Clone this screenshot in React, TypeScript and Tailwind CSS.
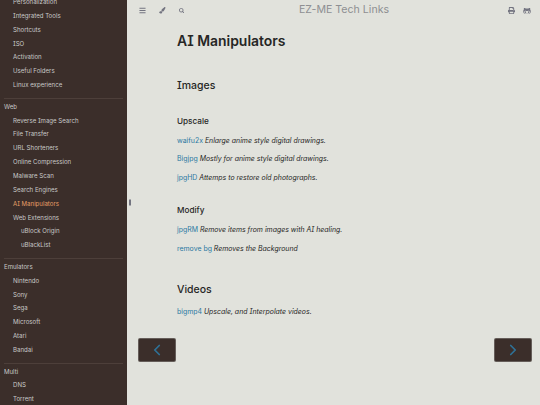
import { ChevronLeft, ChevronRight } from 'lucide-react'
import { FaBars, FaPaintBrush, FaSearch, FaPrint, FaGithubAlt } from 'react-icons/fa'

const SIDEBAR = [
  { items: ['Personalization', 'Integrated Tools', 'Shortcuts', 'ISO', 'Activation', 'Useful Folders', 'Linux experience'] },
  { title: 'Web', items: ['Reverse Image Search', 'File Transfer', 'URL Shorteners', 'Online Compression', 'Malware Scan', 'Search Engines', 'AI Manipulators', 'Web Extensions', '>uBlock Origin', '>uBlackList'] },
  { title: 'Emulators', items: ['Nintendo', 'Sony', 'Sega', 'Microsoft', 'Atari', 'Bandai'] },
  { title: 'Multi', items: ['DNS', 'Torrent'] },
]

function Row({ label, heading }: { label: string; heading?: boolean }) {
  const nested = label.startsWith('>')
  const active = label === 'AI Manipulators'
  const indent = heading ? 'pl-[4px]' : nested ? 'pl-[21px]' : 'pl-[13px]'
  return (
    <div className={`h-[13.87px] leading-[13.87px] whitespace-nowrap ${indent} ${active ? 'text-[#e69f67]' : 'text-[#c8c9c8]'}`}>
      {nested ? label.slice(1) : label}
    </div>
  )
}

function Entry({ name, text }: { name: string; text: string }) {
  return (
    <p className="h-[11px] leading-[11px] whitespace-nowrap text-[6.95px] text-[#262625]">
      <span className="text-[#2b79a2]">{name}</span> <em>{text}</em>
    </p>
  )
}

function NavButton({ children }: { children: React.ReactNode }) {
  return (
    <div className="w-[38px] h-[24px] flex items-center justify-center bg-[#3b2e2a] border border-[#c8c9c8]/30 rounded-[2px] text-[#2f7196]">
      {children}
    </div>
  )
}

export default function App() {
  return (
    <div className="w-[540px] h-[405px] flex overflow-hidden bg-[#e1e2dc] font-['Inter',sans-serif] [font-feature-settings:'cv08']">
      {/* sidebar */}
      <aside className="w-[127px] h-full shrink-0 overflow-hidden bg-[#3b2e2a] text-[6.1px]">
        <div className="-mt-[5px]">
          {SIDEBAR.map((group, i) => (
            <div key={i}>
              {group.title && (
                <>
                  <div className="mx-[4px] mt-[6px] mb-[0.7px] h-px bg-[#4d3f3a]" />
                  <Row label={group.title} heading />
                </>
              )}
              {group.items.map(item => <Row key={item} label={item} />)}
            </div>
          ))}
        </div>
      </aside>

      <div className="w-[5px] shrink-0 flex items-center justify-center -mr-[5px] z-10">
        <div className="w-[2px] h-[6px] bg-[#737480] -translate-y-[0.5px]" />
      </div>

      {/* page */}
      <main className="flex-1 min-w-0 flex flex-col">
        <header className="h-[21px] shrink-0 flex items-center pl-[12px] pr-[9px] text-[#737480]">
          <FaBars size={7} className="mr-[13px]" />
          <FaPaintBrush size={6.5} className="mr-[13px]" />
          <FaSearch size={5.5} />
          <div className="flex-1 text-center text-[10.6px] leading-none text-[#8e8f92] -translate-x-[2px]">EZ-ME Tech Links</div>
          <FaPrint size={7} className="mr-[8px]" />
          <FaGithubAlt size={8} />
        </header>

        <article className="flex-1 min-h-0 pl-[50px] text-[#262625]">
          <h1 className="mt-[10px] h-[20px] leading-[20px] text-[13.95px] font-semibold">AI Manipulators</h1>
          <h2 className="mt-[26px] h-[17px] leading-[17px] text-[10.5px] font-medium">Images</h2>
          <h3 className="mt-[21px] h-[12px] leading-[12px] text-[8.2px] font-medium">Upscale</h3>
          <div className="mt-[8px] flex flex-col gap-[7.4px]">
            <Entry name="waifu2x" text="Enlarge anime style digital drawings." />
            <Entry name="Bigjpg" text="Mostly for anime style digital drawings." />
            <Entry name="jpgHD" text="Attemps to restore old photographs." />
          </div>
          <h3 className="mt-[21.5px] h-[12px] leading-[12px] text-[8.2px] font-medium">Modify</h3>
          <div className="mt-[8px] flex flex-col gap-[7.4px]">
            <Entry name="jpgRM" text="Remove items from images with AI healing." />
            <Entry name="remove bg" text="Removes the Background" />
          </div>
          <h2 className="mt-[27px] h-[17px] leading-[17px] text-[10.5px] font-medium">Videos</h2>
          <div className="mt-[8px]">
            <Entry name="bigmp4" text="Upscale, and Interpolate videos." />
          </div>
        </article>

        <nav className="h-[67px] shrink-0 flex justify-between pl-[11px] pr-[8px]">
          <NavButton><ChevronLeft size={18} strokeWidth={2.3} /></NavButton>
          <NavButton><ChevronRight size={18} strokeWidth={2.3} /></NavButton>
        </nav>
      </main>
    </div>
  )
}
